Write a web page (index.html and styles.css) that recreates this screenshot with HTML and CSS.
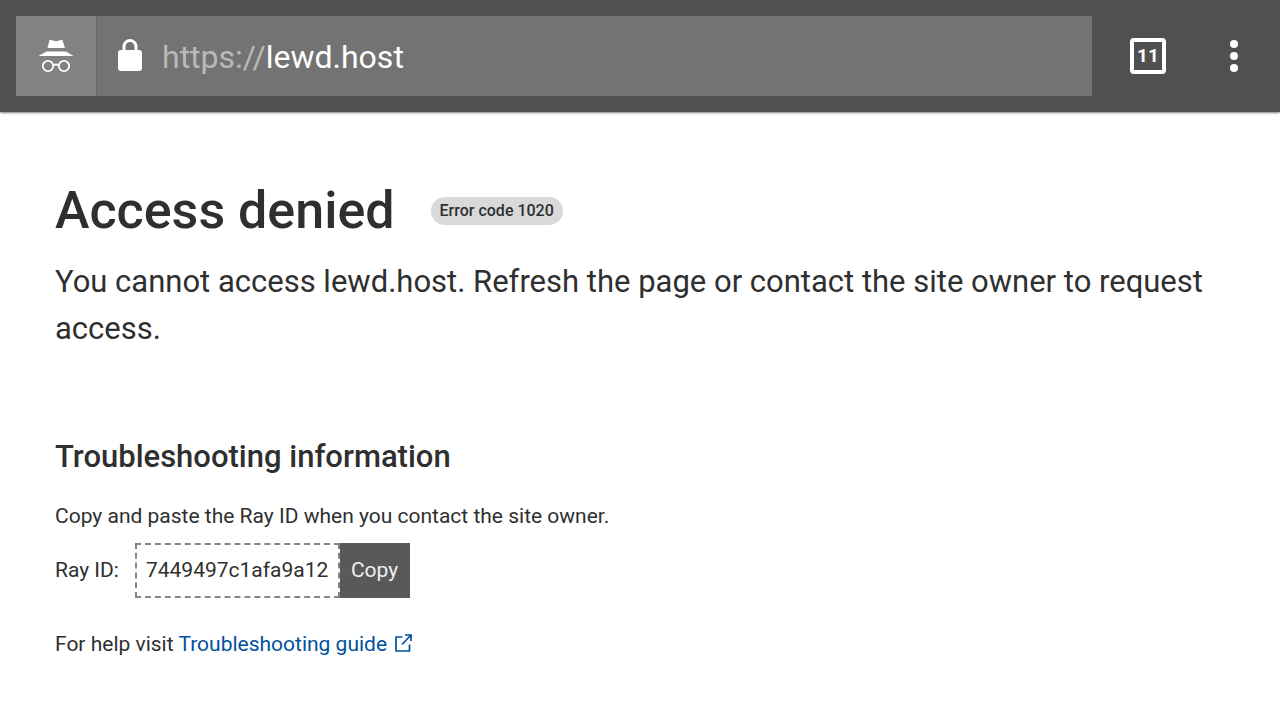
FILE: index.html
```html
<!DOCTYPE html>
<html lang="en">
<head>
    <meta charset="UTF-8">
    <meta name="viewport" content="width=device-width, initial-scale=1.0">
    <title>Access denied</title>
    <link rel="stylesheet" href="styles.css">
</head>
<body>
    <header class="toolbar">
        <div class="address-bar">
            <div class="incognito">
                <svg width="36" height="34" viewBox="0 0 36 34" fill="#fff" aria-hidden="true">
                    <path d="M11.500 1Q14 .6 15 1.500Q18 3 21 1.500Q22 .6 24.500 1L27 9H9.500z"/>
                    <path d="M8.500 12.500H28L35.500 17H.5z"/>
                    <g fill="none" stroke="#fff" stroke-width="1.800">
                        <circle cx="10" cy="27" r="5.200"/>
                        <circle cx="26" cy="27" r="5.200"/>
                        <path d="M15 26.500Q18 24.500 21 26.500"/>
                    </g>
                </svg>
            </div>
            <svg class="lock" width="24" height="34" viewBox="0 0 24 34" aria-hidden="true">
                <rect y="11" width="24" height="21" rx="3" fill="#fff"/>
                <path d="M6 12V7.500a6 6 0 0 1 12 0V12" fill="none" stroke="#fff" stroke-width="3"/>
            </svg>
            <label class="scheme" for="address">https://</label>
            <input class="address" type="text" id="address" value="lewd.host" spellcheck="false">
        </div>
        <button class="tabs" type="button" aria-label="Open tabs"><span class="tab-count">11</span></button>
        <button class="menu" type="button" aria-label="Menu">
            <svg width="8" height="32" viewBox="0 0 8 32" fill="#fff" aria-hidden="true">
                <circle cx="4" cy="4" r="4"/>
                <circle cx="4" cy="16" r="4"/>
                <circle cx="4" cy="28" r="4"/>
            </svg>
        </button>
    </header>

    <main class="content">
        <div class="title-row">
            <h1>Access denied</h1>
            <span class="error-code">Error code 1020</span>
        </div>
        <p class="message">You cannot access lewd.host. Refresh the page or contact the site owner to request access.</p>

        <h2>Troubleshooting information</h2>
        <p>Copy and paste the Ray ID when you contact the site owner.</p>
        <div class="ray-row">
            <label for="ray-id">Ray ID:</label>
            <input class="ray-id" type="text" id="ray-id" value="7449497c1afa9a12" readonly>
            <button class="copy" type="button" id="copy">Copy</button>
        </div>
        <p>For help visit <a class="guide" href="#">Troubleshooting guide<svg class="external" width="17" height="18" viewBox="0 0 17 18" fill="none" stroke="currentColor" stroke-width="1.700" aria-hidden="true"><path d="M7.500 3H1V17H14.500V10.500M10 1H16V7M16 1L7 10.500"/></svg></a></p>
    </main>

    <script>
        document.getElementById('copy').addEventListener('click', function() {
            navigator.clipboard.writeText(document.getElementById('ray-id').value);
        });
    </script>
</body>
</html>
```
FILE: styles.css
```css
* {
    box-sizing: border-box;
}

body {
    margin: 0;
    font-family: Roboto, sans-serif;
    font-size: 21px;
    line-height: 30px;
    color: #2f2f2f;
    background: #fff;
}

button, input {
    font: inherit;
    border: none;
    border-radius: 0;
    margin: 0;
    padding: 0;
}

button {
    cursor: pointer;
}

.toolbar {
    display: flex;
    align-items: center;
    padding: 16px;
    background: #505050;
    box-shadow: 0 1px 2px rgba(0, 0, 0, 0.5);
}

.address-bar {
    flex: 1;
    display: flex;
    align-items: center;
    min-width: 0;
    height: 80px;
    font-size: 32px;
    line-height: 40px;
    background: #737373;
    border-radius: 2px;
    overflow: hidden;
}

.incognito {
    display: flex;
    align-items: center;
    justify-content: center;
    width: 81px;
    height: 100%;
    background: #828282;
    border-right: 1px solid #696969;
}

.lock {
    margin: 0 20px 0 21px;
}

.scheme, .address {
    padding-top: 2px;
}

.scheme {
    color: #b9b9b9;
}

.address {
    flex: 1;
    min-width: 0;
    color: #fff;
    background: none;
    outline: none;
}

.tabs, .menu {
    display: flex;
    align-items: center;
    justify-content: center;
    height: 80px;
    color: #fff;
    background: none;
}

.tabs {
    width: 112px;
}

.tab-count {
    width: 36px;
    height: 36px;
    border: 4px solid #fff;
    border-radius: 4px;
    font-size: 19px;
    font-weight: 700;
    line-height: 28px;
}

.menu {
    width: 60px;
}

.content {
    padding: 68px 55px 56px;
}

.title-row {
    display: flex;
    align-items: center;
    gap: 36px;
}

h1, h2, p {
    margin: 0;
}

h1 {
    font-size: 52px;
    font-weight: 500;
    line-height: 62px;
}

.error-code {
    padding: 0 9px;
    font-size: 16px;
    font-weight: 500;
    line-height: 28px;
    background: #d9d9d9;
    border-radius: 14px;
}

.message {
    margin-top: 16px;
    font-size: 31px;
    line-height: 47px;
}

h2 {
    margin: 85px 0 24px;
    font-size: 31px;
    font-weight: 500;
    line-height: 40px;
}

.ray-row {
    display: flex;
    align-items: center;
    line-height: 28px;
    margin: 12px 0 31px;
}

.ray-row label {
    padding-bottom: 2px;
}

.ray-id {
    width: 205px;
    height: 55px;
    margin-left: 16px;
    padding: 0 9px 2px;
    color: inherit;
    border: 2px dashed #858585;
    outline: none;
}

.copy {
    height: 55px;
    padding: 0 12px 2px 11px;
    color: #f0f0f0;
    background: #595959;
}

.guide {
    color: #0051a0;
    text-decoration: none;
}

.external {
    margin-left: 8px;
    vertical-align: -1px;
}
```
